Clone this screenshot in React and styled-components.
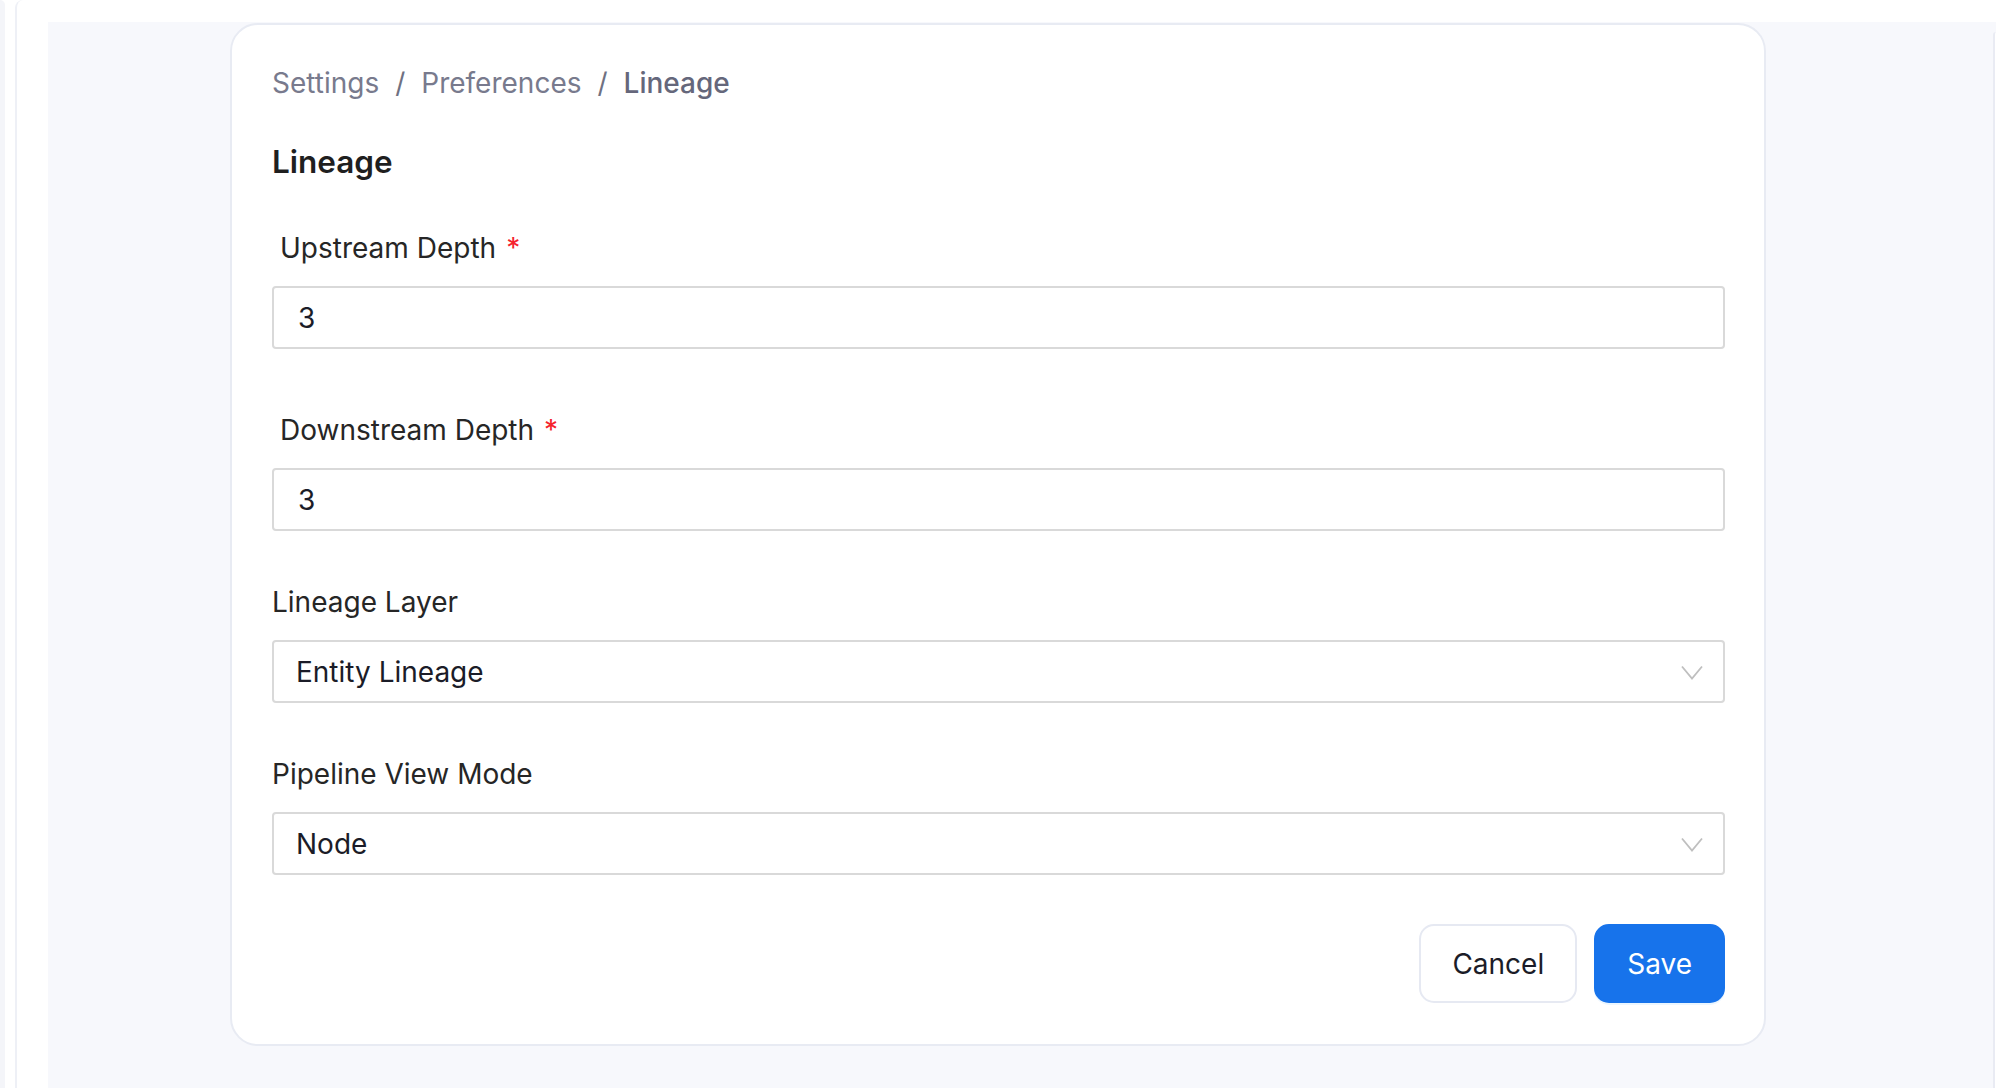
import styled, { createGlobalStyle } from "styled-components";

const GlobalStyle = createGlobalStyle`
    * {
        box-sizing: border-box;
    }
    body {
        margin: 0;
        font-family: Inter, "Noto Sans", "Liberation Sans", sans-serif;
        background: #ffffff;
    }
`;

const Page = styled.div`
    width: 100vw;
    height: 100vh;
    display: flex;
    overflow: hidden;
    background: #ffffff;
`;

const LeftRail = styled.div`
    width: 48px;
    flex-shrink: 0;
    display: flex;
    gap: 10px;
`;

const RailBar = styled.div`
    width: 5px;
    background: #f4f5f9;
    border-top-right-radius: 8px;
`;

const RailEdge = styled.div`
    width: 8px;
    border-left: 2px solid #eef0f6;
    border-top-left-radius: 10px;
`;

const Main = styled.div`
    flex: 1;
    margin-top: 22px;
    background: #f7f8fc;
    padding: 1px 227px 0 182px;
    display: flex;
    flex-direction: column;
`;

const RightRail = styled.div`
    width: 3px;
    flex-shrink: 0;
    margin-top: 22px;
    background: #f7f8fc;
    display: flex;
`;

const RightEdge = styled.div`
    flex: 1;
    margin-top: 10px;
    border-left: 2px solid #e9ebf3;
    border-top-left-radius: 10px;
    background: #ffffff;
`;

const Card = styled.div`
    background: #ffffff;
    border: 2px solid #e8ebf3;
    border-radius: 28px;
    padding: 41px 39px 41px 40px;
    display: flex;
    flex-direction: column;
`;

const Breadcrumb = styled.div`
    display: flex;
    align-items: center;
    font-size: 28px;
    line-height: 34px;
    color: #787a8d;
`;

const Crumb = styled.span`
    color: ${(props) => (props.current ? "#65677b" : "#787a8d")};
    font-weight: ${(props) => (props.current ? 500 : 400)};
`;

const Separator = styled.span`
    margin: 0 16px;
    color: #6f7182;
`;

const Title = styled.h1`
    margin: 45px 0 0;
    font-size: 31.5px;
    line-height: 34px;
    font-weight: 600;
    color: #1f1f1f;
`;

const Field = styled.div`
    display: flex;
    flex-direction: column;
    margin-top: ${(props) => props.gap}px;
`;

const Label = styled.label`
    font-size: 28px;
    line-height: 34px;
    color: #262626;
    padding-left: ${(props) => (props.required ? 8 : 0)}px;
    margin-bottom: 21px;
`;

const Star = styled.span`
    color: #f5222d;
    margin-left: 10px;
`;

const Input = styled.div`
    height: 63px;
    border: 2px solid #d9d9d9;
    border-radius: 4px;
    padding: 0 20px 0 22px;
    display: flex;
    align-items: center;
    justify-content: space-between;
    font-size: 28px;
    color: #1b1c28;
    background: #ffffff;
`;

const Value = styled.span`
    padding-left: ${(props) => (props.numeric ? 2 : 0)}px;
`;

const Chevron = styled.svg`
    width: 22px;
    height: 15px;
    margin-top: 1px;
`;

const Actions = styled.div`
    margin-top: 49px;
    display: flex;
    justify-content: flex-end;
    gap: 17px;
`;

const Button = styled.button`
    height: 79px;
    padding: 0 31px;
    border-radius: 15px;
    font-family: inherit;
    font-size: 28px;
    cursor: pointer;
    border: 2px solid ${(props) => (props.primary ? "#1773eb" : "#e6e9f2")};
    background: ${(props) => (props.primary ? "#1773eb" : "#ffffff")};
    color: ${(props) => (props.primary ? "#ffffff" : "#1b1c28")};
    box-shadow: ${(props) =>
        props.primary ? "0 2px 0 rgba(5, 145, 255, 0.08)" : "none"};
`;

const fields = [
    { label: "Upstream Depth", value: "3", required: true, gap: 52 },
    { label: "Downstream Depth", value: "3", required: true, gap: 64 },
    { label: "Lineage Layer", value: "Entity Lineage", select: true, gap: 54 },
    { label: "Pipeline View Mode", value: "Node", select: true, gap: 54 },
];

export default function App() {
    return (
        <>
            <GlobalStyle />
            <Page>
                <LeftRail>
                    <RailBar />
                    <RailEdge />
                </LeftRail>
                <Main>
                    <Card>
                        <Breadcrumb>
                            <Crumb>Settings</Crumb>
                            <Separator>/</Separator>
                            <Crumb>Preferences</Crumb>
                            <Separator>/</Separator>
                            <Crumb current>Lineage</Crumb>
                        </Breadcrumb>
                        <Title>Lineage</Title>
                        {fields.map((f) => (
                            <Field key={f.label} gap={f.gap}>
                                <Label required={f.required}>
                                    {f.label}
                                    {f.required && <Star>*</Star>}
                                </Label>
                                <Input>
                                    <Value numeric={!f.select}>{f.value}</Value>
                                    {f.select && (
                                        <Chevron viewBox="0 0 22 15" fill="none">
                                            <polyline
                                                points="1,1.5 11,13.5 21,1.5"
                                                stroke="#bfbfbf"
                                                strokeWidth="1.8"
                                            />
                                        </Chevron>
                                    )}
                                </Input>
                            </Field>
                        ))}
                        <Actions>
                            <Button>Cancel</Button>
                            <Button primary>Save</Button>
                        </Actions>
                    </Card>
                </Main>
                <RightRail>
                    <RightEdge />
                </RightRail>
            </Page>
        </>
    );
}
